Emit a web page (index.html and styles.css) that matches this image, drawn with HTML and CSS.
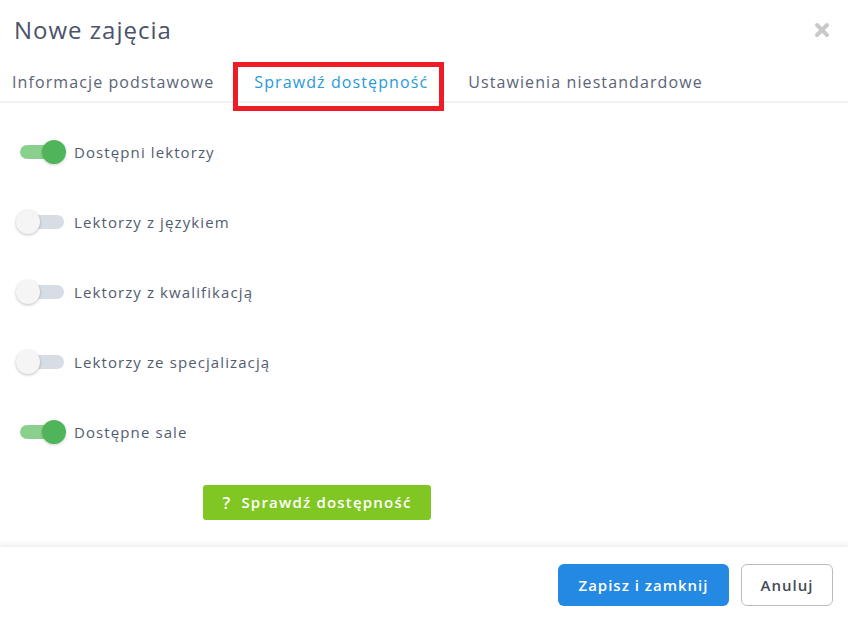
FILE: index.html
```html
<!DOCTYPE html>
<html lang="pl">
<head>
<meta charset="utf-8">
<link rel="stylesheet" href="styles.css">
</head>
<body>
<div class="modal">
  <div class="header">
    <h1 class="title">Nowe zajęcia</h1>
    <span class="close">
      <svg width="16" height="16" viewBox="0 0 16 16"><path d="M3 3 L13 13 M13 3 L3 13" stroke="#c9c9c9" stroke-width="4" stroke-linecap="round"/></svg>
    </span>
  </div>
  <div class="tabs">
    <span class="tab">Informacje podstawowe</span>
    <span class="tab active">Sprawdź dostępność</span>
    <span class="tab">Ustawienia niestandardowe</span>
  </div>
  <div class="content">
    <div class="row"><span class="switch on"><span class="knob"></span></span><span class="label">Dostępni lektorzy</span></div>
    <div class="row"><span class="switch"><span class="knob"></span></span><span class="label">Lektorzy z językiem</span></div>
    <div class="row"><span class="switch"><span class="knob"></span></span><span class="label">Lektorzy z kwalifikacją</span></div>
    <div class="row"><span class="switch"><span class="knob"></span></span><span class="label">Lektorzy ze specjalizacją</span></div>
    <div class="row"><span class="switch on"><span class="knob"></span></span><span class="label">Dostępne sale</span></div>
    <div class="check-row">
      <button class="btn-check"><span class="q">?</span>Sprawdź dostępność</button>
    </div>
  </div>
  <div class="footer">
    <button class="btn btn-primary">Zapisz i zamknij</button>
    <button class="btn btn-default">Anuluj</button>
  </div>
</div>
</body>
</html>
```

FILE: styles.css
```css
* { box-sizing: border-box; }
html, body { margin: 0; padding: 0; background: #fff; }
body {
  font-family: "Open Sans", "Noto Sans", sans-serif;
  color: #525c70;
  width: 848px;
  height: 624px;
  overflow: hidden;
}
.modal { display: flex; flex-direction: column; height: 624px; }
.header {
  display: flex;
  align-items: flex-start;
  justify-content: space-between;
  padding: 14px 18px 0 14px;
  height: 60px;
}
.title {
  margin: 0;
  font-size: 24px;
  font-weight: 400;
  line-height: 32px;
  letter-spacing: 1px;
  color: #4a5367;
}
.close { display: flex; margin-top: 8px; }
.tabs {
  display: flex;
  gap: 40px;
  padding: 10px 0 0 12px;
  height: 43px;
  border-bottom: 2px solid #f1f1f1;
}
.tab {
  position: relative;
  font-size: 16px;
  line-height: 24px;
  letter-spacing: 1.1px;
  color: #5b6477;
}
.tab.active { color: #2a9ad9; }
.tab.active::after {
  content: "";
  position: absolute;
  left: -21px;
  right: -16px;
  top: -8px;
  bottom: -10px;
  border: 5px solid #ee1c25;
}
.content {
  flex: 1;
  padding-top: 14px;
}
.row {
  display: flex;
  align-items: center;
  height: 70px;
}
.switch {
  position: relative;
  width: 44px;
  height: 14px;
  margin-left: 20px;
  border-radius: 7px;
  background: #d6dde5;
}
.switch .knob {
  position: absolute;
  top: -5px;
  left: -4px;
  width: 24px;
  height: 24px;
  border-radius: 50%;
  background: #f5f5f5;
  box-shadow: 0 1px 3px rgba(0,0,0,0.25);
}
.switch.on { background: #8bd08d; }
.switch.on .knob {
  left: 22px;
  background: #4fb45a;
  box-shadow: 0 1px 3px rgba(0,0,0,0.2);
}
.label {
  margin-left: 10px;
  font-size: 15px;
  letter-spacing: 1.1px;
  color: #525c70;
}
.check-row {
  display: flex;
  align-items: center;
  height: 70px;
  padding-left: 203px;
}
.btn-check {
  font-family: inherit;
  display: flex;
  align-items: center;
  gap: 10px;
  height: 35px;
  width: 228px;
  justify-content: center;
  padding: 0;
  border: none;
  border-radius: 3px;
  background: #80c723;
  color: #fff;
  font-size: 15px;
  font-weight: 600;
  letter-spacing: 1.2px;
}
.btn-check .q { font-size: 17px; font-weight: 600; }
.footer {
  display: flex;
  justify-content: flex-end;
  gap: 12px;
  padding: 17px 15px 0 0;
  height: 78px;
  box-shadow: 0 -3px 4px rgba(0,0,0,0.05);
  border-top: 1px solid #f2f2f2;
}
.btn {
  font-family: inherit;
  height: 42px;
  border-radius: 6px;
  font-size: 15px;
  font-weight: 600;
  letter-spacing: 1px;
  padding: 0;
}
.btn-primary {
  background: #2489e3;
  border: none;
  color: #fff;
  width: 171px;
}
.btn-default {
  background: #fff;
  border: 1px solid #b9bcc2;
  color: #444b57;
  width: 92px;
}
```
